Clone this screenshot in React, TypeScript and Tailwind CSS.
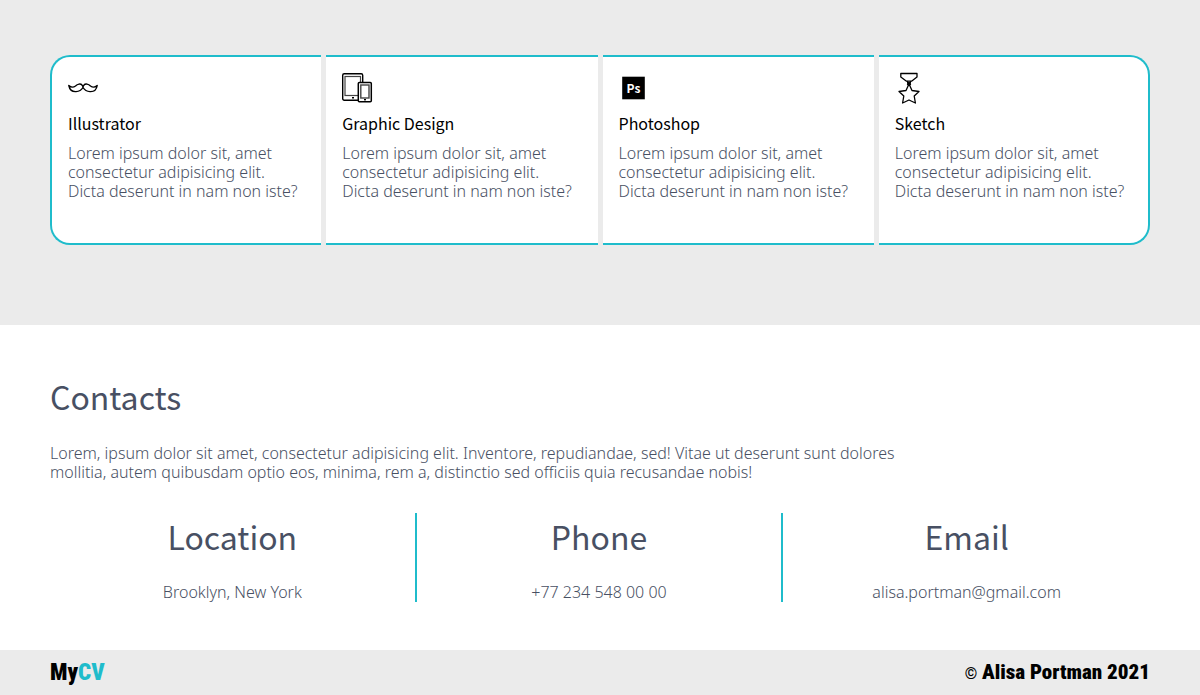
import type { ReactNode } from "react";

const iconClass = "block h-[32px] w-[32px]";

function MustacheIcon() {
  return (
    <svg viewBox="0 0 32 32" className={iconClass} fill="none" stroke="#000" strokeWidth="1.4" strokeLinejoin="round" aria-hidden="true">
      <path d="M0.800 13.500C3 15.500 5.500 15.500 7.500 14C9.500 12 12.500 11.200 14.200 13.200Q15 14.100 15 15.500Q15 14.100 15.800 13.200C17.500 11.200 20.500 12 22.500 14C24.500 15.500 27 15.500 29.200 13.500C28.500 18 25.500 19.800 22 19.600C18.500 19.400 16.500 18 15 15.500C13.500 18 11.500 19.400 8 19.600C4.500 19.800 1.700 18 0.800 13.500Z" />
    </svg>
  );
}

function DevicesIcon() {
  return (
    <svg viewBox="0 0 32 32" className={iconClass} fill="none" aria-hidden="true">
      <rect x="0.700" y="1.700" width="20" height="26.600" rx="1.500" stroke="#000" strokeWidth="1.400" />
      <rect x="3" y="4.500" width="15.500" height="19" stroke="#444" strokeWidth="1.200" />
      <rect x="10" y="25" width="2" height="1.500" fill="#000" />
      <rect x="16.300" y="10.500" width="13" height="19.300" rx="1" fill="#fff" stroke="#000" strokeWidth="1.500" />
      <rect x="18.800" y="13" width="8.200" height="13" stroke="#444" strokeWidth="1.400" />
      <rect x="22" y="27" width="2" height="1.400" fill="#000" />
    </svg>
  );
}

function PhotoshopIcon() {
  return (
    <svg viewBox="0 0 32 32" className={iconClass} fill="none" aria-hidden="true">
      <rect x="3.200" y="4.700" width="22.600" height="22.600" fill="#000" />
      <text x="14.500" y="20.500" textAnchor="middle" fill="#fff" fontFamily="'Noto Sans CJK KR', sans-serif" fontWeight="700" fontSize="12">
        Ps
      </text>
    </svg>
  );
}

function MedalIcon() {
  return (
    <svg viewBox="0 0 32 32" className={iconClass} fill="none" stroke="#000" strokeWidth="1.3" strokeLinejoin="round" aria-hidden="true">
      <path d="M5.800 1.500H22V5L16.500 9.200H11.500L5.800 5Z" />
      <path d="M12 9.200L15.800 13M16 9.200L12.200 13M12 11H16" />
      <path d="M14 12L17 18.500L24 19.500L19.200 24L20.400 31L14 28L7.600 31L8.800 24L4 19.500L11 18.500Z" />
    </svg>
  );
}

const skills: { name: string; icon: ReactNode; shape: string }[] = [
  { name: "Illustrator", icon: <MustacheIcon />, shape: "rounded-l-[20px] border-l-2" },
  { name: "Graphic Design", icon: <DevicesIcon />, shape: "" },
  { name: "Photoshop", icon: <PhotoshopIcon />, shape: "" },
  { name: "Sketch", icon: <MedalIcon />, shape: "rounded-r-[20px] border-r-2" },
];

const contacts = [
  { label: "Location", value: "Brooklyn, New York" },
  { label: "Phone", value: "+77 234 548 00 00" },
  { label: "Email", value: "alisa.portman@gmail.com" },
];

const headingFont = "font-['Noto_Sans_CJK_KR',sans-serif] font-normal";

export default function App() {
  return (
    <div className="bg-white font-['Noto_Sans',sans-serif] text-[16px] leading-[19px] font-light text-[#485063]">
      <section className="bg-[#ebebeb] px-[50px] pt-[55px] pb-[80px]">
        <div className="grid grid-cols-4 gap-[5px]">
          {skills.map((skill) => (
            <article key={skill.name} className={`border-y-2 border-[#1fbccb] bg-white px-4 pt-[15px] pb-[42px] ${skill.shape}`}>
              {skill.icon}
              <h3 className={`${headingFont} mt-[7px] mb-[9px] text-[16px] leading-[24px] text-black`}>{skill.name}</h3>
              <p>
                Lorem ipsum dolor sit, amet
                <br />
                consectetur adipisicing elit.
                <br />
                Dicta deserunt in nam non iste?
              </p>
            </article>
          ))}
        </div>
      </section>

      <section className="px-[50px] pt-[47px] pb-[48px]">
        <h2 className={`${headingFont} mb-[24px] text-[32px] leading-[48px]`}>Contacts</h2>
        <p className="w-4/5">
          Lorem, ipsum dolor sit amet, consectetur adipisicing elit. Inventore, repudiandae, sed! Vitae ut deserunt sunt
          dolores mollitia, autem quibusdam optio eos, minima, rem a, distinctio sed officiis quia recusandae nobis!
        </p>
        <div className="mt-[31px] grid grid-cols-3 divide-x-2 divide-[#1fbccb] text-center">
          {contacts.map((contact) => (
            <div key={contact.label}>
              <h3 className={`${headingFont} mb-[24px] text-[32px] leading-[46px]`}>{contact.label}</h3>
              <p>{contact.value}</p>
            </div>
          ))}
        </div>
      </section>

      <footer className="flex h-[45px] items-center justify-between bg-[#ebebeb] px-[50px] font-['Roboto_Condensed','Noto_Sans_CJK_KR',sans-serif] font-black text-black">
        <a href="#top" className="text-[23px] leading-[30px]">
          My<span className="text-[#1fbccb]">CV</span>
        </a>
        <p className="text-[21px] leading-[30px]">
          <span className="text-[16px]">©</span> Alisa Portman 2021
        </p>
      </footer>
    </div>
  );
}
